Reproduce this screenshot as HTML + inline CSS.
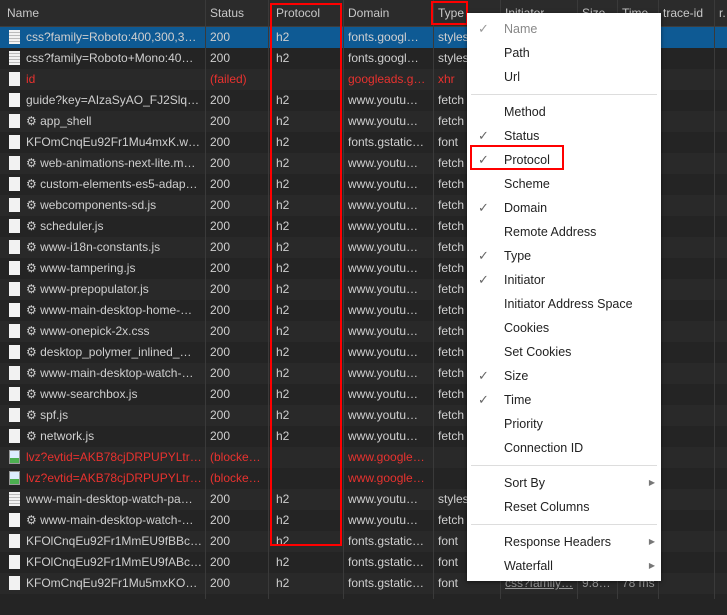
<!DOCTYPE html>
<html><head><style>
*{margin:0;padding:0;box-sizing:border-box}
html,body{width:727px;height:599px}
body{background:#242424;overflow:hidden;position:relative;font-family:"Liberation Sans","DejaVu Sans",sans-serif;font-size:12px;color:#cfcfcf}
.hdr{position:absolute;left:0;top:0;width:727px;height:27px;background:#2b2b2b;border-bottom:1px solid #3d3d3d}
.row{position:absolute;left:0;width:727px;height:21px}
.c{position:absolute;top:0;height:100%;line-height:21px;white-space:nowrap;overflow:hidden}
.row .c:first-child{width:194px;text-overflow:ellipsis}
.hdr .c{line-height:27px;color:#c8c8c8}
.vl{position:absolute;top:0;height:599px;width:1px;background:#3a3a3a}
.ic{display:inline-block;width:11px;height:14px;background:#f2f2f2;vertical-align:-3px;margin-right:6px}
.ic.doc{background:repeating-linear-gradient(#f2f2f2 0 2px,#bbb 2px 3px)}
.ic.img{background:linear-gradient(#ddeeff 60%,#4caf50 60%);border:1px solid #999}
.red{color:#e8322f}
.menu{position:absolute;left:467px;top:13px;width:194px;height:568px;background:#fff;box-shadow:0 1px 4px rgba(0,0,0,.5);color:#222;font-size:12.5px}
.mi{position:absolute;left:37px;line-height:16px}
.ck{position:absolute;left:11px;color:#666;font-size:13px;line-height:16px}
.sep{position:absolute;left:4px;right:4px;height:1px;background:#ddd}
.ar{position:absolute;right:6px;color:#777;font-size:8px;line-height:16px}
.box{position:absolute;border:2px solid #f00}
</style></head><body>
<div class="hdr">
<div class="c" style="left:7px">Name</div>
<div class="c" style="left:210px">Status</div>
<div class="c" style="left:276px">Protocol</div>
<div class="c" style="left:348px">Domain</div>
<div class="c" style="left:438px">Type</div>
<div class="c" style="left:505px">Initiator</div>
<div class="c" style="left:582px">Size</div>
<div class="c" style="left:622px">Time</div>
<div class="c" style="left:663px">trace-id</div>
<div class="c" style="left:719px">r.</div>
</div>
<div class="row" style="top:27px;background:#0e5a94"></div>
<div class="row" style="top:48px;background:#242424"></div>
<div class="row" style="top:69px;background:#292929"></div>
<div class="row" style="top:90px;background:#242424"></div>
<div class="row" style="top:111px;background:#292929"></div>
<div class="row" style="top:132px;background:#242424"></div>
<div class="row" style="top:153px;background:#292929"></div>
<div class="row" style="top:174px;background:#242424"></div>
<div class="row" style="top:195px;background:#292929"></div>
<div class="row" style="top:216px;background:#242424"></div>
<div class="row" style="top:237px;background:#292929"></div>
<div class="row" style="top:258px;background:#242424"></div>
<div class="row" style="top:279px;background:#292929"></div>
<div class="row" style="top:300px;background:#242424"></div>
<div class="row" style="top:321px;background:#292929"></div>
<div class="row" style="top:342px;background:#242424"></div>
<div class="row" style="top:363px;background:#292929"></div>
<div class="row" style="top:384px;background:#242424"></div>
<div class="row" style="top:405px;background:#292929"></div>
<div class="row" style="top:426px;background:#242424"></div>
<div class="row" style="top:447px;background:#292929"></div>
<div class="row" style="top:468px;background:#242424"></div>
<div class="row" style="top:489px;background:#292929"></div>
<div class="row" style="top:510px;background:#242424"></div>
<div class="row" style="top:531px;background:#292929"></div>
<div class="row" style="top:552px;background:#242424"></div>
<div class="row" style="top:573px;background:#292929"></div>
<div class="row" style="top:594px;background:#242424"></div>

<div class="vl" style="left:205px"></div><div class="vl" style="left:268px"></div><div class="vl" style="left:343px"></div><div class="vl" style="left:433px"></div><div class="vl" style="left:500px"></div><div class="vl" style="left:577px"></div><div class="vl" style="left:617px"></div><div class="vl" style="left:658px"></div><div class="vl" style="left:714px"></div>

<div class="row" style="top:27px"><div class="c" style="left:9px"><span class="ic doc"></span>css?family=Roboto:400,300,3…</div><div class="c" style="left:210px">200</div><div class="c" style="left:276px">h2</div><div class="c" style="left:348px">fonts.googl…</div><div class="c" style="left:438px">styles</div></div>
<div class="row" style="top:48px"><div class="c" style="left:9px"><span class="ic doc"></span>css?family=Roboto+Mono:40…</div><div class="c" style="left:210px">200</div><div class="c" style="left:276px">h2</div><div class="c" style="left:348px">fonts.googl…</div><div class="c" style="left:438px">styles</div></div>
<div class="row red" style="top:69px"><div class="c" style="left:9px"><span class="ic"></span>id</div><div class="c" style="left:210px">(failed)</div><div class="c" style="left:348px">googleads.g…</div><div class="c" style="left:438px">xhr</div></div>
<div class="row" style="top:90px"><div class="c" style="left:9px"><span class="ic"></span>guide?key=AIzaSyAO_FJ2SlqU…</div><div class="c" style="left:210px">200</div><div class="c" style="left:276px">h2</div><div class="c" style="left:348px">www.youtu…</div><div class="c" style="left:438px">fetch</div></div>
<div class="row" style="top:111px"><div class="c" style="left:9px"><span class="ic"></span>⚙ app_shell</div><div class="c" style="left:210px">200</div><div class="c" style="left:276px">h2</div><div class="c" style="left:348px">www.youtu…</div><div class="c" style="left:438px">fetch</div></div>
<div class="row" style="top:132px"><div class="c" style="left:9px"><span class="ic"></span>KFOmCnqEu92Fr1Mu4mxK.w…</div><div class="c" style="left:210px">200</div><div class="c" style="left:276px">h2</div><div class="c" style="left:348px">fonts.gstatic…</div><div class="c" style="left:438px">font</div></div>
<div class="row" style="top:153px"><div class="c" style="left:9px"><span class="ic"></span>⚙ web-animations-next-lite.m…</div><div class="c" style="left:210px">200</div><div class="c" style="left:276px">h2</div><div class="c" style="left:348px">www.youtu…</div><div class="c" style="left:438px">fetch</div></div>
<div class="row" style="top:174px"><div class="c" style="left:9px"><span class="ic"></span>⚙ custom-elements-es5-adap…</div><div class="c" style="left:210px">200</div><div class="c" style="left:276px">h2</div><div class="c" style="left:348px">www.youtu…</div><div class="c" style="left:438px">fetch</div></div>
<div class="row" style="top:195px"><div class="c" style="left:9px"><span class="ic"></span>⚙ webcomponents-sd.js</div><div class="c" style="left:210px">200</div><div class="c" style="left:276px">h2</div><div class="c" style="left:348px">www.youtu…</div><div class="c" style="left:438px">fetch</div></div>
<div class="row" style="top:216px"><div class="c" style="left:9px"><span class="ic"></span>⚙ scheduler.js</div><div class="c" style="left:210px">200</div><div class="c" style="left:276px">h2</div><div class="c" style="left:348px">www.youtu…</div><div class="c" style="left:438px">fetch</div></div>
<div class="row" style="top:237px"><div class="c" style="left:9px"><span class="ic"></span>⚙ www-i18n-constants.js</div><div class="c" style="left:210px">200</div><div class="c" style="left:276px">h2</div><div class="c" style="left:348px">www.youtu…</div><div class="c" style="left:438px">fetch</div></div>
<div class="row" style="top:258px"><div class="c" style="left:9px"><span class="ic"></span>⚙ www-tampering.js</div><div class="c" style="left:210px">200</div><div class="c" style="left:276px">h2</div><div class="c" style="left:348px">www.youtu…</div><div class="c" style="left:438px">fetch</div></div>
<div class="row" style="top:279px"><div class="c" style="left:9px"><span class="ic"></span>⚙ www-prepopulator.js</div><div class="c" style="left:210px">200</div><div class="c" style="left:276px">h2</div><div class="c" style="left:348px">www.youtu…</div><div class="c" style="left:438px">fetch</div></div>
<div class="row" style="top:300px"><div class="c" style="left:9px"><span class="ic"></span>⚙ www-main-desktop-home-…</div><div class="c" style="left:210px">200</div><div class="c" style="left:276px">h2</div><div class="c" style="left:348px">www.youtu…</div><div class="c" style="left:438px">fetch</div></div>
<div class="row" style="top:321px"><div class="c" style="left:9px"><span class="ic"></span>⚙ www-onepick-2x.css</div><div class="c" style="left:210px">200</div><div class="c" style="left:276px">h2</div><div class="c" style="left:348px">www.youtu…</div><div class="c" style="left:438px">fetch</div></div>
<div class="row" style="top:342px"><div class="c" style="left:9px"><span class="ic"></span>⚙ desktop_polymer_inlined_…</div><div class="c" style="left:210px">200</div><div class="c" style="left:276px">h2</div><div class="c" style="left:348px">www.youtu…</div><div class="c" style="left:438px">fetch</div></div>
<div class="row" style="top:363px"><div class="c" style="left:9px"><span class="ic"></span>⚙ www-main-desktop-watch-…</div><div class="c" style="left:210px">200</div><div class="c" style="left:276px">h2</div><div class="c" style="left:348px">www.youtu…</div><div class="c" style="left:438px">fetch</div></div>
<div class="row" style="top:384px"><div class="c" style="left:9px"><span class="ic"></span>⚙ www-searchbox.js</div><div class="c" style="left:210px">200</div><div class="c" style="left:276px">h2</div><div class="c" style="left:348px">www.youtu…</div><div class="c" style="left:438px">fetch</div></div>
<div class="row" style="top:405px"><div class="c" style="left:9px"><span class="ic"></span>⚙ spf.js</div><div class="c" style="left:210px">200</div><div class="c" style="left:276px">h2</div><div class="c" style="left:348px">www.youtu…</div><div class="c" style="left:438px">fetch</div></div>
<div class="row" style="top:426px"><div class="c" style="left:9px"><span class="ic"></span>⚙ network.js</div><div class="c" style="left:210px">200</div><div class="c" style="left:276px">h2</div><div class="c" style="left:348px">www.youtu…</div><div class="c" style="left:438px">fetch</div></div>
<div class="row red" style="top:447px"><div class="c" style="left:9px"><span class="ic img"></span>lvz?evtid=AKB78cjDRPUPYLtr…</div><div class="c" style="left:210px">(blocke…</div><div class="c" style="left:348px">www.google…</div></div>
<div class="row red" style="top:468px"><div class="c" style="left:9px"><span class="ic img"></span>lvz?evtid=AKB78cjDRPUPYLtr…</div><div class="c" style="left:210px">(blocke…</div><div class="c" style="left:348px">www.google…</div></div>
<div class="row" style="top:489px"><div class="c" style="left:9px"><span class="ic doc"></span>www-main-desktop-watch-pa…</div><div class="c" style="left:210px">200</div><div class="c" style="left:276px">h2</div><div class="c" style="left:348px">www.youtu…</div><div class="c" style="left:438px">styles</div></div>
<div class="row" style="top:510px"><div class="c" style="left:9px"><span class="ic"></span>⚙ www-main-desktop-watch-…</div><div class="c" style="left:210px">200</div><div class="c" style="left:276px">h2</div><div class="c" style="left:348px">www.youtu…</div><div class="c" style="left:438px">fetch</div></div>
<div class="row" style="top:531px"><div class="c" style="left:9px"><span class="ic"></span>KFOlCnqEu92Fr1MmEU9fBBc…</div><div class="c" style="left:210px">200</div><div class="c" style="left:276px">h2</div><div class="c" style="left:348px">fonts.gstatic…</div><div class="c" style="left:438px">font</div></div>
<div class="row" style="top:552px"><div class="c" style="left:9px"><span class="ic"></span>KFOlCnqEu92Fr1MmEU9fABc…</div><div class="c" style="left:210px">200</div><div class="c" style="left:276px">h2</div><div class="c" style="left:348px">fonts.gstatic…</div><div class="c" style="left:438px">font</div></div>
<div class="row" style="top:573px"><div class="c" style="left:9px"><span class="ic"></span>KFOmCnqEu92Fr1Mu5mxKOz…</div><div class="c" style="left:210px">200</div><div class="c" style="left:276px">h2</div><div class="c" style="left:348px">fonts.gstatic…</div><div class="c" style="left:438px">font</div><div class="c" style="left:505px;text-decoration:underline;color:#999">css?family…</div><div class="c" style="left:582px;color:#999">9.8…</div><div class="c" style="left:622px;color:#999">78 ms</div></div>

<div class="box" style="left:270px;top:3px;width:72px;height:543px"></div>
<div class="box" style="left:431px;top:1px;width:37px;height:24px"></div>

<div class="menu">
<span class="ck" style="top:8px;color:#999">✓</span><div class="mi" style="top:8px;color:#888">Name</div>
<div class="mi" style="top:32px">Path</div>
<div class="mi" style="top:56px">Url</div>
<div class="sep" style="top:81px"></div>
<div class="mi" style="top:91px">Method</div>
<span class="ck" style="top:115px">✓</span><div class="mi" style="top:115px">Status</div>
<span class="ck" style="top:139px">✓</span><div class="mi" style="top:139px">Protocol</div>
<div class="mi" style="top:163px">Scheme</div>
<span class="ck" style="top:187px">✓</span><div class="mi" style="top:187px">Domain</div>
<div class="mi" style="top:211px">Remote Address</div>
<span class="ck" style="top:235px">✓</span><div class="mi" style="top:235px">Type</div>
<span class="ck" style="top:259px">✓</span><div class="mi" style="top:259px">Initiator</div>
<div class="mi" style="top:283px">Initiator Address Space</div>
<div class="mi" style="top:307px">Cookies</div>
<div class="mi" style="top:331px">Set Cookies</div>
<span class="ck" style="top:355px">✓</span><div class="mi" style="top:355px">Size</div>
<span class="ck" style="top:379px">✓</span><div class="mi" style="top:379px">Time</div>
<div class="mi" style="top:403px">Priority</div>
<div class="mi" style="top:427px">Connection ID</div>
<div class="sep" style="top:452px"></div>
<div class="mi" style="top:462px">Sort By</div><span class="ar" style="top:462px">▶</span>
<div class="mi" style="top:486px">Reset Columns</div>
<div class="sep" style="top:511px"></div>
<div class="mi" style="top:521px">Response Headers</div><span class="ar" style="top:521px">▶</span>
<div class="mi" style="top:545px">Waterfall</div><span class="ar" style="top:545px">▶</span>
</div>
<div class="box" style="left:470px;top:145px;width:94px;height:25px"></div>
</body></html>
